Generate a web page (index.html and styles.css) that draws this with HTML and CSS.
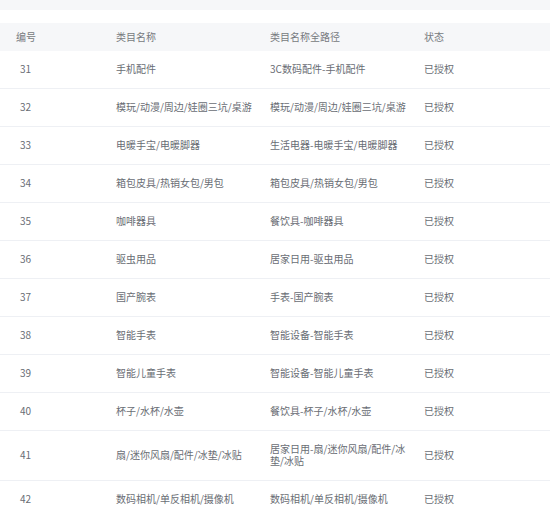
FILE: index.html
```html
<!DOCTYPE html>
<html lang="zh-CN">
<head>
<meta charset="utf-8">
<link rel="stylesheet" href="styles.css">
</head>
<body>
<div class="topbar"></div>
<table class="grid">
  <colgroup>
    <col class="c1"><col class="c2"><col class="c3"><col class="c4">
  </colgroup>
  <thead>
    <tr><th class="first">编号</th><th>类目名称</th><th>类目名称全路径</th><th>状态</th></tr>
  </thead>
  <tbody>
    <tr><td class="first">31</td><td>手机配件</td><td>3C数码配件-手机配件</td><td>已授权</td></tr>
    <tr><td class="first">32</td><td>模玩/动漫/周边/娃圈三坑/桌游</td><td>模玩/动漫/周边/娃圈三坑/桌游</td><td>已授权</td></tr>
    <tr><td class="first">33</td><td>电暖手宝/电暖脚器</td><td>生活电器-电暖手宝/电暖脚器</td><td>已授权</td></tr>
    <tr><td class="first">34</td><td>箱包皮具/热销女包/男包</td><td>箱包皮具/热销女包/男包</td><td>已授权</td></tr>
    <tr><td class="first">35</td><td>咖啡器具</td><td>餐饮具-咖啡器具</td><td>已授权</td></tr>
    <tr><td class="first">36</td><td>驱虫用品</td><td>居家日用-驱虫用品</td><td>已授权</td></tr>
    <tr><td class="first">37</td><td>国产腕表</td><td>手表-国产腕表</td><td>已授权</td></tr>
    <tr><td class="first">38</td><td>智能手表</td><td>智能设备-智能手表</td><td>已授权</td></tr>
    <tr><td class="first">39</td><td>智能儿童手表</td><td>智能设备-智能儿童手表</td><td>已授权</td></tr>
    <tr><td class="first">40</td><td>杯子/水杯/水壶</td><td>餐饮具-杯子/水杯/水壶</td><td>已授权</td></tr>
    <tr><td class="first">41</td><td>扇/迷你风扇/配件/冰垫/冰贴</td><td>居家日用-扇/迷你风扇/配件/冰垫/冰贴</td><td>已授权</td></tr>
    <tr><td class="first">42</td><td>数码相机/单反相机/摄像机</td><td>数码相机/单反相机/摄像机</td><td>已授权</td></tr>
  </tbody>
</table>
</body>
</html>
```

FILE: styles.css
```css
html, body {
  margin: 0;
  padding: 0;
  background: #ffffff;
}
body {
  font-family: "Noto Sans CJK SC", "Noto Sans", sans-serif;
  font-size: 10px;
  color: #696d74;
}
.topbar {
  height: 10px;
  background: #f6f7f9;
  margin-bottom: 13px;
}
.grid {
  width: 100%;
  border-collapse: collapse;
  table-layout: fixed;
}
.c1 { width: 116px; }
.c2 { width: 154px; }
.c3 { width: 154px; }
.grid th {
  background: #f6f7f9;
  color: #777a80;
  font-weight: normal;
  text-align: left;
  height: 28px;
  padding: 0 15px 0 0;
  line-height: 12px;
}
.grid th.first { padding-left: 16px; }
.grid td {
  padding: 12px 15px 13px 0;
  line-height: 12px;
  border-bottom: 1px solid #eef0f4;
  vertical-align: middle;
}
.grid td.first { padding-left: 20px; }
```
